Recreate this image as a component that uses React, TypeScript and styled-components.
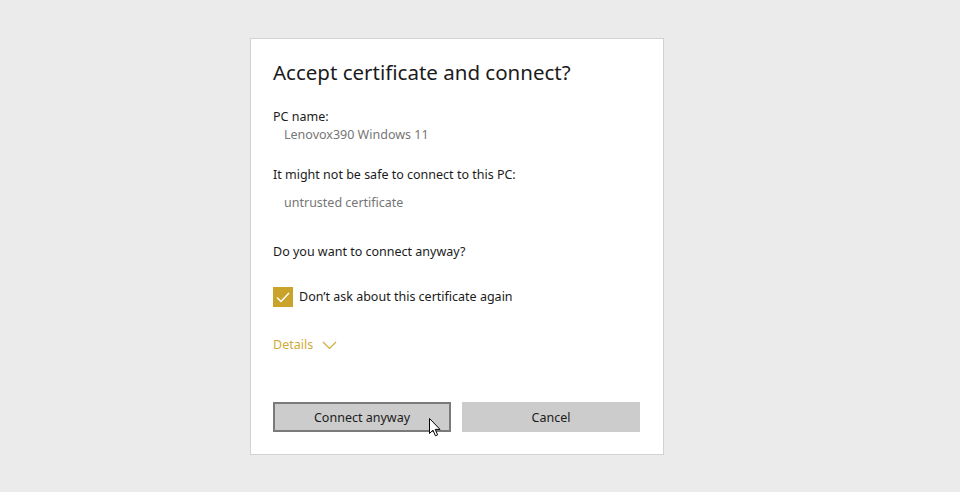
import React from 'react';
import styled, { createGlobalStyle } from 'styled-components';

const GlobalStyle = createGlobalStyle`
  html, body {
    margin: 0;
    padding: 0;
    background: #ebebeb;
  }
  body {
    font-family: 'Noto Sans', 'Open Sans', sans-serif;
    color: #1b1b1b;
  }
`;

const Page = styled.div`
  width: 960px;
  height: 492px;
  display: flex;
  justify-content: flex-start;
  padding: 38px 0 0 250px;
  box-sizing: border-box;
`;

const Dialog = styled.div`
  width: 414px;
  height: 417px;
  box-sizing: border-box;
  background: #fff;
  border: 1px solid #d2d2d2;
  padding: 19px 22px 0 22px;
  display: flex;
  flex-direction: column;
`;

const Title = styled.h1`
  margin: 0;
  font-size: 20.5px;
  line-height: 28px;
  font-weight: 400;
  color: #1b1b1b;
`;

const Label = styled.div<{ $gap: number }>`
  margin-top: ${p => p.$gap}px;
  font-size: 12.5px;
  line-height: 18px;
  color: #1b1b1b;
`;

const Value = styled.div<{ $gap: number }>`
  margin-top: ${p => p.$gap}px;
  padding-left: 11px;
  font-size: 12.5px;
  line-height: 18px;
  color: #767676;
`;

const CheckRow = styled.label`
  margin-top: 26px;
  display: flex;
  align-items: center;
  gap: 6px;
  font-size: 12.5px;
  line-height: 20px;
`;

const Box = styled.span`
  width: 20px;
  height: 20px;
  background: #c9a32b;
  display: flex;
  align-items: center;
  justify-content: center;
`;

const Details = styled.div`
  margin-top: 29px;
  display: flex;
  align-items: center;
  gap: 9px;
  font-size: 12.5px;
  line-height: 18px;
  color: #d1aa3a;
`;

const Buttons = styled.div`
  margin-top: 48px;
  display: grid;
  grid-template-columns: 178px 178px;
  column-gap: 11px;
`;

const Button = styled.button<{ $focused?: boolean }>`
  position: relative;
  height: 30px;
  box-sizing: border-box;
  border: 2px solid ${p => (p.$focused ? '#7a7a7a' : '#cccccc')};
  background: #cccccc;
  font-family: inherit;
  font-size: 12.5px;
  color: #1b1b1b;
  padding: 0;
`;

const Cursor = styled.svg`
  position: absolute;
  left: 154px;
  top: 14px;
`;

export default function App() {
  return (
    <>
      <GlobalStyle />
      <Page>
        <Dialog>
          <Title>Accept certificate and connect?</Title>
          <Label $gap={22}>PC name:</Label>
          <Value $gap={0}>Lenovox390 Windows 11</Value>
          <Label $gap={22}>It might not be safe to connect to this PC:</Label>
          <Value $gap={10}>untrusted certificate</Value>
          <Label $gap={31}>Do you want to connect anyway?</Label>
          <CheckRow>
            <Box>
              <svg width="14" height="11" viewBox="0 0 14 11">
                <path d="M1 5.5 L5 9.5 L13 1" fill="none" stroke="#fff" strokeWidth="1.4" />
              </svg>
            </Box>
            Don’t ask about this certificate again
          </CheckRow>
          <Details>
            Details
            <svg width="15" height="9" viewBox="0 0 15 9">
              <path d="M1 1 L7.5 7.5 L14 1" fill="none" stroke="#d1aa3a" strokeWidth="1.2" />
            </svg>
          </Details>
          <Buttons>
            <Button $focused>
              Connect anyway
              <Cursor width="12" height="19" viewBox="0 0 12 19">
                <path
                  d="M0.5 0.5 L0.5 15.5 L4 12.2 L6.4 17.8 L8.6 16.9 L6.3 11.4 L11 11.4 Z"
                  fill="#fff"
                  stroke="#000"
                  strokeWidth="1"
                  strokeLinejoin="round"
                />
              </Cursor>
            </Button>
            <Button>Cancel</Button>
          </Buttons>
        </Dialog>
      </Page>
    </>
  );
}
